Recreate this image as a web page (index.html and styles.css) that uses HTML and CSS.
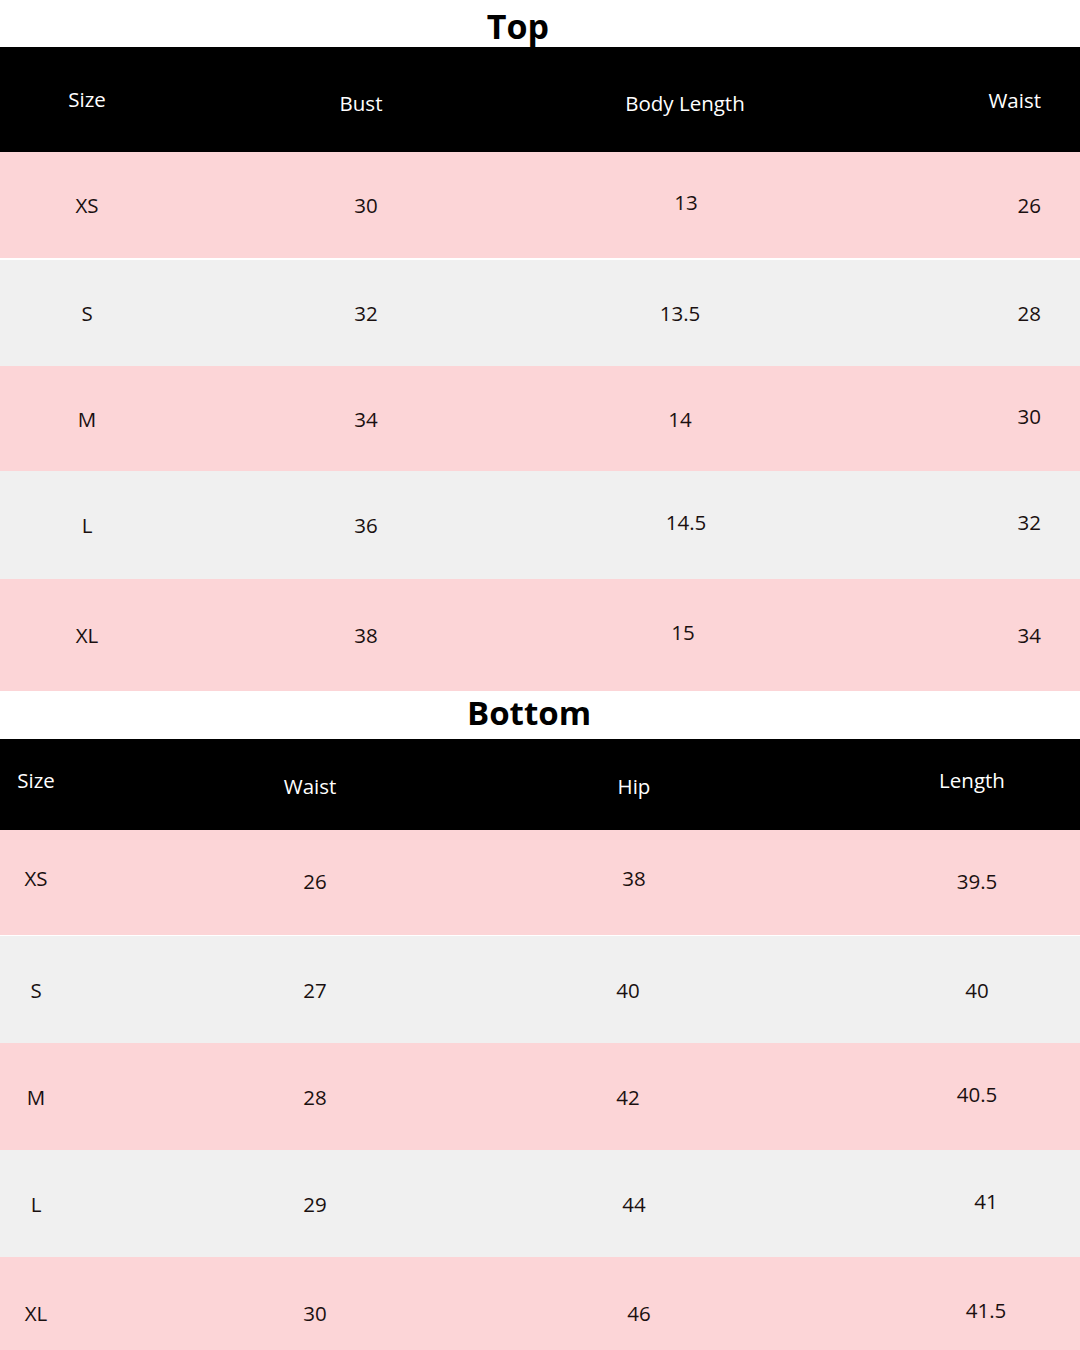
FILE: index.html
```html
<!DOCTYPE html>
<html lang="en">
<head>
<meta charset="utf-8">
<title>Size Chart</title>
<link rel="stylesheet" href="styles.css">
</head>
<body>
<div class="page">
  <section class="chart chart-top">
    <h2 class="title title-top">Top</h2>
    <div class="row head">
      <div class="c c1 up1">Size</div><div class="c c2">Bust</div><div class="c c3">Body Length</div><div class="c c4">Waist</div>
    </div>
    <div class="row pink"><div class="c c1">XS</div><div class="c c2">30</div><div class="c c3 up">13</div><div class="c c4">26</div></div>
    <div class="row gray"><div class="c c1">S</div><div class="c c2">32</div><div class="c c3 sh">13.5</div><div class="c c4">28</div></div>
    <div class="row pink"><div class="c c1">M</div><div class="c c2">34</div><div class="c c3 sh">14</div><div class="c c4 up">30</div></div>
    <div class="row gray"><div class="c c1">L</div><div class="c c2">36</div><div class="c c3 up">14.5</div><div class="c c4 up">32</div></div>
    <div class="row pink"><div class="c c1">XL</div><div class="c c2">38</div><div class="c c3 up lf">15</div><div class="c c4">34</div></div>
  </section>

  <section class="chart chart-bottom">
    <h2 class="title title-bottom">Bottom</h2>
    <div class="row head">
      <div class="c c1 up">Size</div><div class="c c2">Waist</div><div class="c c3">Hip</div><div class="c c4 up">Length</div>
    </div>
    <div class="row pink"><div class="c c1 up">XS</div><div class="c c2">26</div><div class="c c3 up">38</div><div class="c c4">39.5</div></div>
    <div class="row gray"><div class="c c1">S</div><div class="c c2">27</div><div class="c c3 sh">40</div><div class="c c4">40</div></div>
    <div class="row pink"><div class="c c1">M</div><div class="c c2">28</div><div class="c c3 sh">42</div><div class="c c4 up">40.5</div></div>
    <div class="row gray"><div class="c c1">L</div><div class="c c2">29</div><div class="c c3">44</div><div class="c c4 up far">41</div></div>
    <div class="row pink"><div class="c c1">XL</div><div class="c c2">30</div><div class="c c3 rt">46</div><div class="c c4 up far">41.5</div></div>
  </section>
</div>
</body>
</html>
```
FILE: styles.css
```css
* { box-sizing: border-box; }
html, body { margin: 0; padding: 0; background: #ffffff; }
body {
  font-family: "Open Sans", "Noto Sans", "Liberation Sans", sans-serif;
  color: #1a1010;
  width: 1080px;
  height: 1350px;
  overflow: hidden;
}
.page { display: flex; flex-direction: column; }
.chart { display: flex; flex-direction: column; }

.title {
  margin: 0;
  font-family: "Open Sans", "Noto Sans", sans-serif;
  font-weight: 700;
  color: #000;
  display: flex;
  align-items: center;
  justify-content: center;
}
.title-top { height: 47px; font-size: 34px; padding-top: 4px; padding-right: 44px; }
.title-bottom { height: 48px; font-size: 33px; padding-bottom: 6px; padding-right: 22px; }

.row {
  display: grid;
  align-items: center;
  font-size: 20.5px;
}
.row.head { background: #000; color: #fff; }
.row.pink { background: #fcd5d7; }
.row.gray { background: #f0f0f0; }

.c { white-space: nowrap; }
.c.up { transform: translateY(-3px); }
.c.up1 { transform: translateY(-1px); }

/* Top chart */
.chart-top .row { grid-template-columns: 174px 384px 256px 1fr; }
.chart-top .c1, .chart-top .c2, .chart-top .c3 { text-align: center; }
.chart-top .c4 { text-align: right; padding-right: 39px; }
.chart-top .c3.sh { padding-right: 12px; }
.chart-top .c3.lf { padding-right: 6px; }
.chart-top .row.head { height: 105px; }
.chart-top .row.head .c2, .chart-top .row.head .c3 { padding-top: 6px; }
.chart-top .row.head .c2 { padding-right: 10px; }
.chart-top .row.head .c3 { padding-right: 2px; }
.chart-top .row:nth-of-type(2) { height: 108px; border-bottom: 2px solid #fff; }
.chart-top .row:nth-of-type(3) { height: 106px; }
.chart-top .row:nth-of-type(4) { height: 105px; }
.chart-top .row:nth-of-type(5) { height: 108px; }
.chart-top .row:nth-of-type(6) { height: 112px; }

/* Bottom chart */
.chart-bottom .row { grid-template-columns: 72px 486px 152px 1fr; }
.chart-bottom .c1, .chart-bottom .c2, .chart-bottom .c3, .chart-bottom .c4 { text-align: center; }
.chart-bottom .c3.sh { padding-right: 12px; }
.chart-bottom .c3.rt { padding-left: 10px; }
.chart-bottom .c4 { padding-left: 164px; }
.chart-bottom .c4.far { padding-left: 182px; }
.chart-bottom .row.head .c4 { padding-left: 154px; }
.chart-bottom .row.head { height: 91px; }
.chart-bottom .row.head .c2 { padding-top: 2px; padding-right: 10px; }
.chart-bottom .row.head .c3 { padding-top: 2px; }
.chart-bottom .row.head .c1 { transform: translateY(-5px); }
.chart-bottom .row.head .c4 { transform: translateY(-5px); }
.chart-bottom .row:nth-of-type(2) { height: 106px; border-bottom: 1px solid #fff; padding-bottom: 4px; }
.chart-bottom .row:nth-of-type(3) { height: 107px; }
.chart-bottom .row:nth-of-type(4) { height: 107px; }
.chart-bottom .row:nth-of-type(5) { height: 107px; }
.chart-bottom .row:nth-of-type(6) { height: 93px; align-items: start; padding-top: 42px; }
```
